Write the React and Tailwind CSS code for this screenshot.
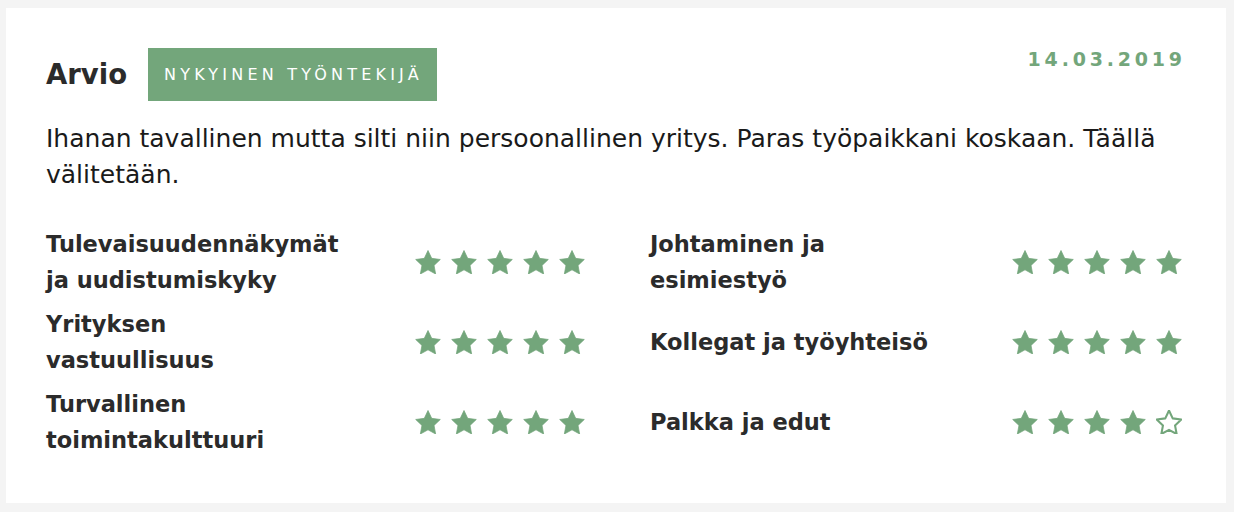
import React from "react";

const GREEN = "#73a67b";

function Star({ filled }) {
  return (
    <svg width="26" height="24.5" viewBox="1.6 1.8 20.8 19.9" className="block">
      <polygon
        points="12,2.2 15,8.6 22,9.5 16.9,14.3 18.2,21.3 12,17.9 5.8,21.3 7.1,14.3 2,9.5 9,8.6"
        fill={filled ? GREEN : "none"}
        stroke={GREEN}
        strokeWidth={filled ? 0.6 : 1.7}
        strokeLinejoin="round"
      />
    </svg>
  );
}

function Stars({ n }) {
  return (
    <div className="flex gap-[10px]">
      {[0, 1, 2, 3, 4].map((i) => (
        <Star key={i} filled={i < n} />
      ))}
    </div>
  );
}

function Row({ label, n }) {
  return (
    <div className="flex items-center justify-between h-[72px]">
      <div className="w-[284px] text-[22.5px] leading-[36px] font-bold text-[#2b2b2b]">{label}</div>
      <Stars n={n} />
    </div>
  );
}

export default function App() {
  const left = [
    ["Tulevaisuudennäkymät ja uudistumiskyky", 5],
    ["Yrityksen vastuullisuus", 5],
    ["Turvallinen toimintakulttuuri", 5],
  ];
  const right = [
    ["Johtaminen ja esimiestyö", 5],
    ["Kollegat ja työyhteisö", 5],
    ["Palkka ja edut", 4],
  ];
  return (
    <div
      className="w-[1234px] h-[512px] bg-[#f4f4f4] pt-[8px] pl-[6px]"
      style={{ fontFamily: "'DejaVu Sans', sans-serif" }}
    >
      <div className="w-[1220px] h-[495px] bg-white pl-[40px] pr-[44px] pt-[40px]">
        <div className="flex items-start justify-between">
          <div className="flex items-center gap-[21px]">
            <div className="text-[27.5px] font-semibold text-[#2b2b2b] leading-none">Arvio</div>
            <div
              className="h-[53px] pl-[16px] pr-[18px] flex items-center text-white text-[16px] tracking-[4.2px]"
              style={{ backgroundColor: GREEN }}
            >
              <span className="mr-[-4.2px]">NYKYINEN TYÖNTEKIJÄ</span>
            </div>
          </div>
          <div className="text-[19px] font-bold tracking-[3.8px] leading-none pt-[2px]" style={{ color: GREEN }}>
            <span className="mr-[-3.8px]">14.03.2019</span>
          </div>
        </div>
        <p className="mt-[20px] text-[25px] leading-[36px] text-[#1a1a1a]">
          Ihanan tavallinen mutta silti niin persoonallinen yritys. Paras työpaikkani koskaan. Täällä välitetään.
        </p>
        <div className="mt-[33px] grid grid-cols-[539px_532px] gap-x-[65px]">
          <div className="flex flex-col gap-[8px]">
            {left.map(([l, n]) => (
              <Row key={l} label={l} n={n} />
            ))}
          </div>
          <div className="flex flex-col gap-[8px]">
            {right.map(([l, n]) => (
              <Row key={l} label={l} n={n} />
            ))}
          </div>
        </div>
      </div>
    </div>
  );
}
